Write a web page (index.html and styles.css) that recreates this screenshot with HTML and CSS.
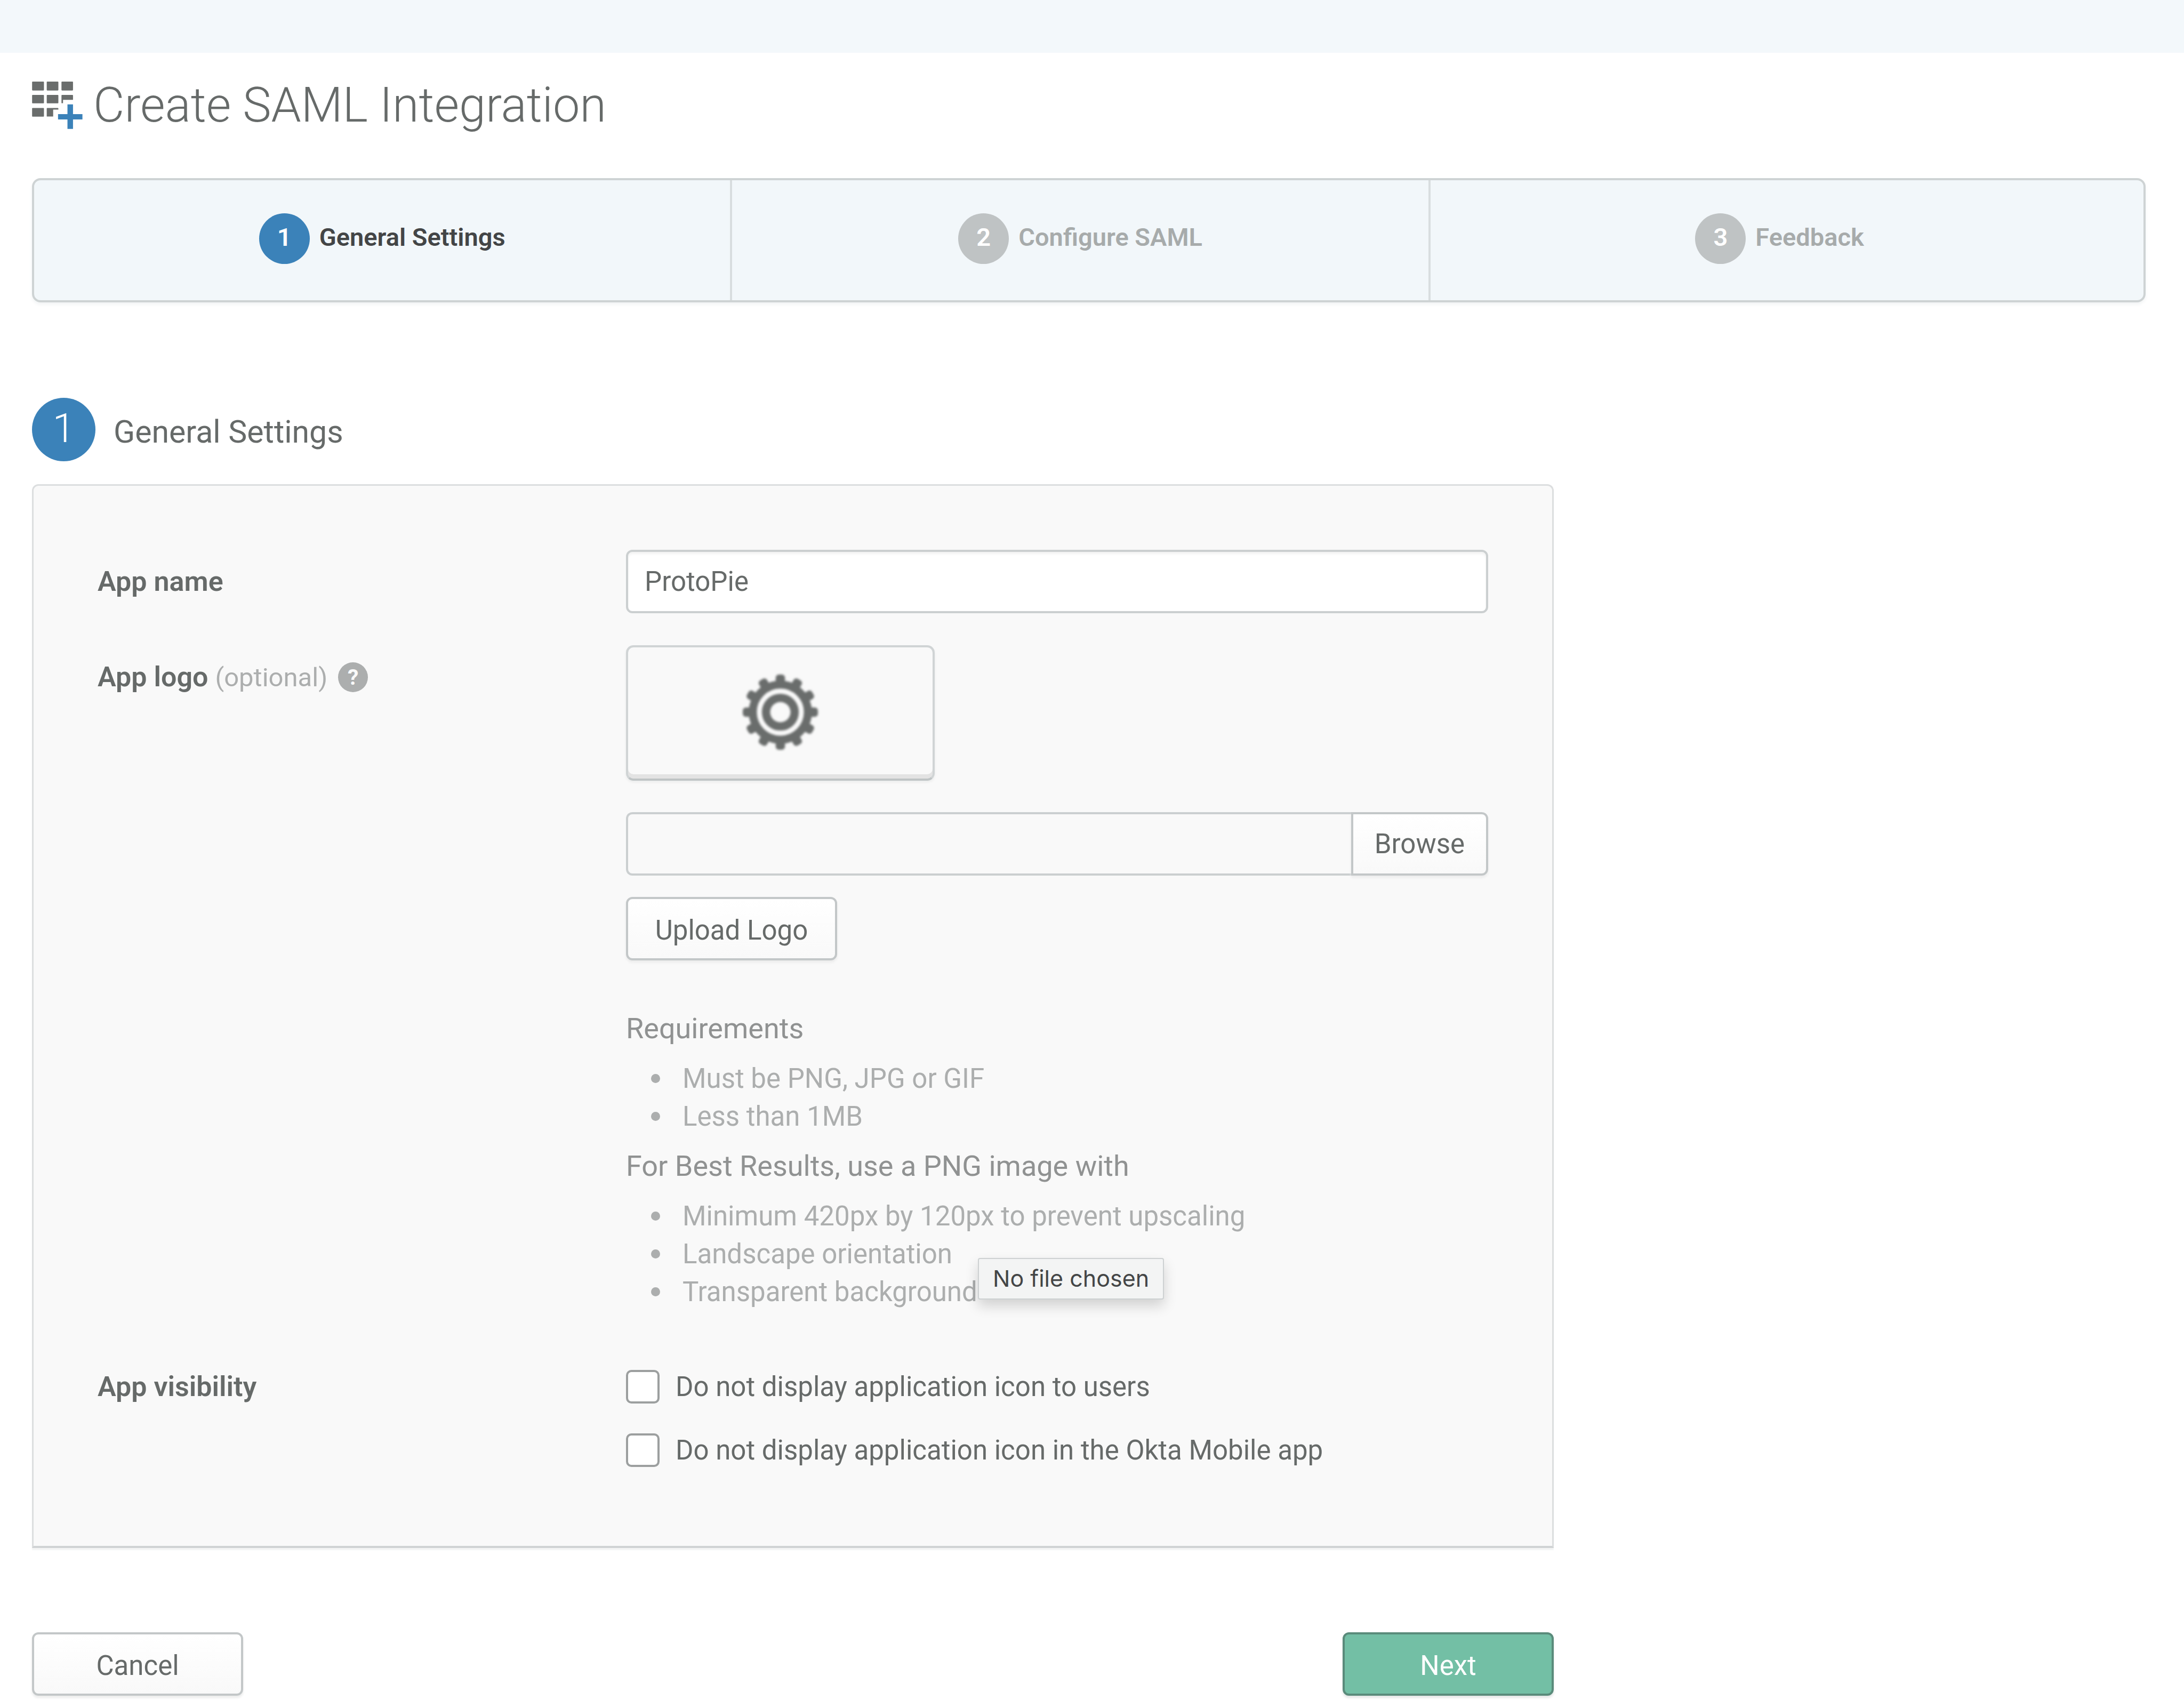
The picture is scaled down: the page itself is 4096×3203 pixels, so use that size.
FILE: index.html
```html
<!DOCTYPE html>
<html lang="en">
<head>
<meta charset="utf-8">
<title>Create SAML Integration</title>
<link rel="stylesheet" href="styles.css">
</head>
<body>
<div class="topbar"></div>
<main class="page">
  <header class="page-header">
    <svg class="page-icon" viewBox="105 132 455 428" aria-hidden="true">
      <g fill="#6a6d6c">
        <rect x="105" y="132" width="107" height="80" rx="5"/>
        <rect x="237" y="132" width="105" height="80" rx="5"/>
        <rect x="370" y="132" width="104" height="80" rx="5"/>
        <rect x="105" y="252" width="107" height="76" rx="5"/>
        <rect x="237" y="252" width="105" height="76" rx="5"/>
        <path d="M375 252h94q5 0 5 5v40h-90v30h-14v-70q0-5 5-5z"/>
        <rect x="105" y="370" width="107" height="78" rx="5"/>
        <path d="M242 370h95q5 0 5 5v9h-47v63h-58v-72q0-5 5-5z"/>
      </g>
      <path fill="#3b82b9" d="M424 338h50v87h85v49h-85v85h-50v-85h-85v-49h85z"/>
    </svg>
    <h1 class="page-title">Create SAML Integration</h1>
  </header>

  <ol class="steps">
    <li class="step step-active"><span class="step-number">1</span><span class="step-name">General Settings</span></li>
    <li class="step"><span class="step-number">2</span><span class="step-name">Configure SAML</span></li>
    <li class="step"><span class="step-number">3</span><span class="step-name">Feedback</span></li>
  </ol>

  <form class="settings">
    <div class="section-header">
      <span class="section-number">1</span>
      <h2 class="section-title">General Settings</h2>
    </div>

    <div class="panel">
      <div class="row">
        <label class="row-label" for="app-name">App name</label>
        <input class="text-input" id="app-name" type="text" value="ProtoPie">
      </div>

      <div class="row">
        <div class="row-label">
          <label for="logo-file">App logo <span class="optional">(optional)</span></label>
          <button class="help" type="button" aria-label="Help">?</button>
        </div>
        <div class="logo-fields">
          <div class="logo-preview">
            <svg class="gear" viewBox="-345 -345 690 690" aria-hidden="true">
              <g fill="#6a6d6c">
                <rect id="teeth" x="-42" y="-340" width="84" height="680" rx="28"/>
                <use href="#teeth" transform="rotate(30)"/>
                <use href="#teeth" transform="rotate(60)"/>
                <use href="#teeth" transform="rotate(90)"/>
                <use href="#teeth" transform="rotate(120)"/>
                <use href="#teeth" transform="rotate(150)"/>
                <circle r="286"/>
              </g>
              <circle r="190" fill="none" stroke="#f9f9f9" stroke-width="46"/>
              <circle r="92" fill="#f9f9f9"/>
            </svg>
          </div>
          <div class="file-picker">
            <input class="file-name" id="logo-file" type="text" readonly>
            <button class="button browse" type="button">Browse</button>
          </div>
          <button class="button wide" type="button">Upload Logo</button>
          <div class="hints">
            <h3 class="hint-title">Requirements</h3>
            <ul class="hint-list">
              <li>Must be PNG, JPG or GIF</li>
              <li>Less than 1MB</li>
            </ul>
            <h3 class="hint-title">For Best Results, use a PNG image with</h3>
            <ul class="hint-list">
              <li>Minimum 420px by 120px to prevent upscaling</li>
              <li>Landscape orientation</li>
              <li>Transparent background</li>
            </ul>
            <div class="tooltip" role="tooltip">No file chosen</div>
          </div>
        </div>
      </div>

      <div class="row" role="group" aria-labelledby="visibility">
        <span class="row-label" id="visibility">App visibility</span>
        <div>
          <label class="check"><input type="checkbox">Do not display application icon to users</label>
          <label class="check"><input type="checkbox">Do not display application icon in the Okta Mobile app</label>
        </div>
      </div>
    </div>

    <div class="actions">
      <button class="button wide" type="button">Cancel</button>
      <button class="button wide primary" type="submit">Next</button>
    </div>
  </form>
</main>
</body>
</html>
```
FILE: styles.css
```css
* {
  box-sizing: border-box;
}

body {
  margin: 0;
  background: #fff;
  color: #666a69;
  font: 400 51px/71px Roboto, "Liberation Sans", sans-serif;
}

h1, h2, h3, ul, ol {
  margin: 0;
  padding: 0;
  font-weight: 400;
  list-style: none;
}

input, button {
  margin: 0;
  color: inherit;
  font: inherit;
}

.topbar {
  height: 99px;
  background: #f3f8fb;
}

.page {
  padding: 54px 72px 22px 60px;
}

/* Title */
.page-header {
  display: flex;
  align-items: center;
  gap: 20px;
  margin-bottom: 92px;
}

.page-icon {
  width: 95px;
  height: 89px;
}

.page-title {
  font-size: 90px;
  font-weight: 300;
  line-height: 89px;
}

/* Wizard steps */
.steps {
  display: grid;
  grid-template-columns: repeat(3, 33.1%);
  margin-bottom: 179px;
  border: 4px solid #ced3d4;
  border-radius: 16px;
  background: #f2f7fa;
  box-shadow: 0 4px 6px #f2f4f5;
}

.step {
  display: flex;
  align-items: center;
  justify-content: center;
  gap: 18px;
  padding: 62px 0 68px;
  color: #a7abab;
  font-size: 47px;
  font-weight: 600;
}

.step:not(:last-child) {
  border-right: 4px solid #d8dddf;
}

.step-number {
  width: 95px;
  height: 95px;
  padding-bottom: 6px;
  border-radius: 50%;
  background: #bfc3c4;
  color: #fff;
  line-height: 89px;
  text-align: center;
}

.step-name {
  padding-bottom: 6px;
}

.step-active {
  color: #434546;
}

.step-active .step-number {
  background: #3b82b9;
}

/* Settings form */
.settings {
  width: 72%;
}

.section-header {
  display: flex;
  align-items: center;
  gap: 34px;
  margin-bottom: 43px;
}

.section-number {
  width: 119px;
  height: 119px;
  border-radius: 50%;
  background: #3b82b9;
  color: #fff;
  font-size: 76px;
  font-weight: 300;
  line-height: 115px;
  text-align: center;
}

.section-title {
  padding-top: 8px;
  font-size: 59px;
}

.panel {
  display: flex;
  flex-direction: column;
  gap: 60px;
  padding: 120px;
  border: 3px solid #dcdedf;
  border-bottom: 4px solid #d0d3d4;
  border-radius: 12px 12px 0 0;
  background: #f9f9f9;
  box-shadow: 0 4px 2px #f4f5f5;
}

.row {
  display: grid;
  grid-template-columns: 991px 1fr;
  align-items: start;
}

.row-label {
  display: flex;
  align-items: center;
  gap: 20px;
  font-size: 52px;
  font-weight: 600;
  line-height: 119px;
}

.optional {
  color: #acaeae;
  font-size: 49px;
  font-weight: 400;
}

.help {
  width: 56px;
  height: 56px;
  padding: 0;
  border: 0;
  border-radius: 50%;
  background: #acaeae;
  color: #f9f9f9;
  font-size: 41px;
  font-weight: 700;
  line-height: 56px;
}

.text-input,
.file-name {
  width: 100%;
  height: 119px;
  padding: 0 31px;
  border: 4px solid #cbcfd0;
  border-radius: 12px;
  background: #fff;
  box-shadow: inset 0 4px 4px #f3f3f3;
}

.logo-preview {
  display: flex;
  align-items: center;
  justify-content: center;
  width: 579px;
  height: 254px;
  margin-bottom: 59px;
  padding-bottom: 4px;
  border: 4px solid #d0d4d5;
  border-bottom-color: #bfc4c5;
  border-radius: 14px;
  box-shadow: inset 0 -8px 0 #e3e3e3, 0 3px 4px #ebecec;
}

.gear {
  width: 143px;
  height: 143px;
  filter: blur(2px);
}

.file-picker {
  display: flex;
  margin-bottom: 40px;
}

.file-name {
  flex: 1;
  min-width: 0;
  border-right: 0;
  border-radius: 12px 0 0 12px;
  background: #f9f9f9;
  box-shadow: none;
}

.button {
  height: 119px;
  padding: 0 40px;
  border: 4px solid #c3c7c8;
  border-radius: 12px;
  background: linear-gradient(#fff, #f9f9f9);
  box-shadow: 0 4px 4px #ececec;
  text-align: center;
}

.browse {
  border-radius: 0 12px 12px 0;
}

.wide {
  display: block;
  width: 396px;
  padding-top: 6px;
}

.primary {
  border-color: #5a8b7b;
  background: #73bfa5;
  box-shadow: 0 4px 4px #e4e6e6;
  color: #fff;
}

/* Upload hints */
.hints {
  position: relative;
  margin-top: 92px;
  margin-bottom: 23px;
}

.hint-title {
  color: #909292;
  font-size: 54px;
  line-height: 72px;
}

.hint-list {
  margin: 22px 0;
  color: #acaeae;
}

.hint-list:last-of-type {
  margin-bottom: 0;
}

.hint-list li {
  display: flex;
  align-items: center;
  gap: 42px;
  padding-left: 47px;
}

.hint-list li::before {
  content: "";
  width: 17px;
  height: 17px;
  border-radius: 50%;
  background: currentColor;
}

.tooltip {
  position: absolute;
  bottom: 21px;
  left: 660px;
  padding: 0 26px 2px;
  border: 2px solid #cdd1d2;
  border-radius: 4px;
  background: #f3f4f4;
  box-shadow: 0 12px 24px rgba(0, 0, 0, 0.16);
  color: #434546;
  font: 400 43px/72px Inter, sans-serif;
}

/* Visibility options */
.check {
  display: flex;
  align-items: center;
  gap: 30px;
  height: 119px;
}

.check input {
  width: 63px;
  height: 63px;
  appearance: none;
  border: 4px solid #9c9f9f;
  border-radius: 10px;
  background: #fff;
}

.actions {
  display: flex;
  justify-content: space-between;
  margin-top: 158px;
}
```
